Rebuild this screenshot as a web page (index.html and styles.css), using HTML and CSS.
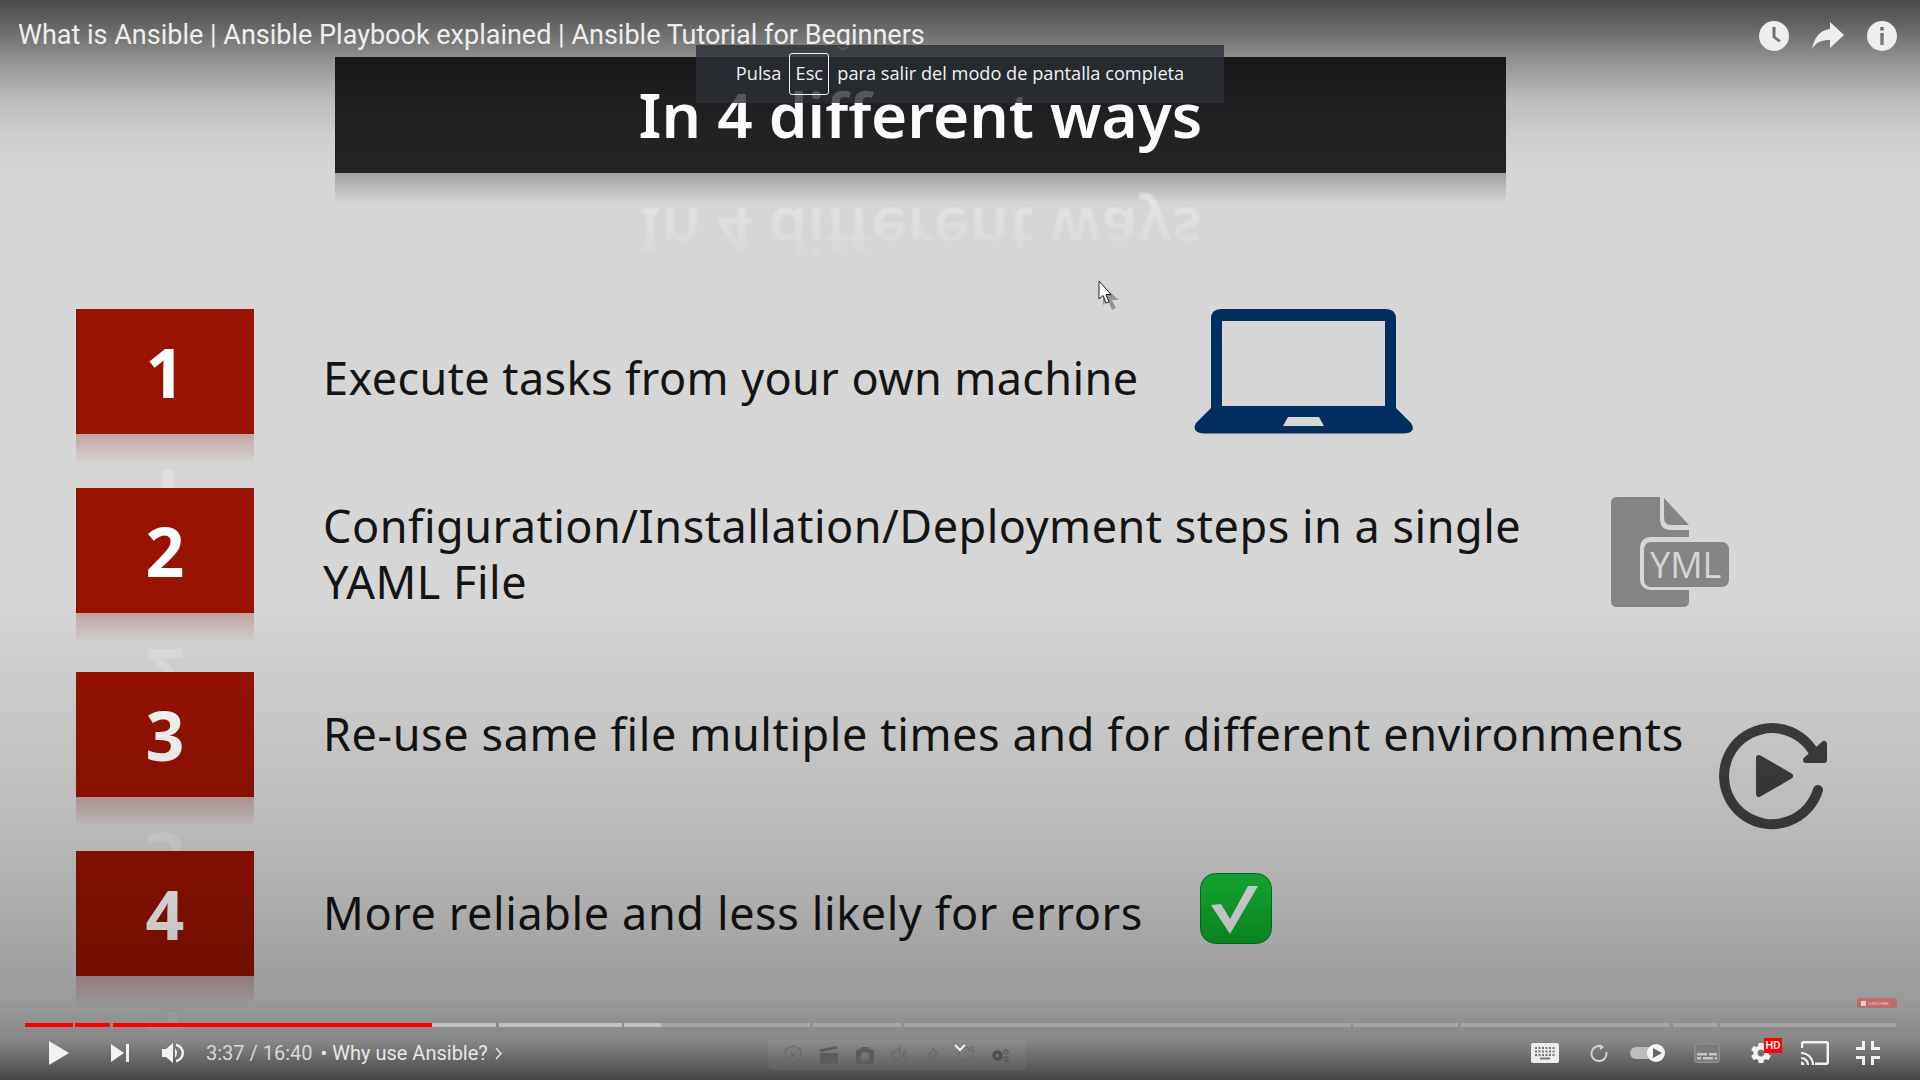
FILE: index.html
```html
<!DOCTYPE html>
<html lang="en">
<head>
<meta charset="utf-8">
<title>What is Ansible</title>
<link rel="stylesheet" href="styles.css">
</head>
<body>
<main class="player">
  <section class="slide">
    <div class="banner"><h1 class="banner-title">In 4 different ways</h1></div>
    <div class="banner-reflect"><div class="banner-flip">In 4 different ways</div></div>
    <div class="rows">
      <div class="row">
        <div class="badge-col"><div class="badge">1</div><div class="reflect"><div class="reflect-digit">1</div></div></div>
        <p class="row-text t1">Execute tasks from your own machine</p>
        <svg class="icon-laptop" width="220" height="125" viewBox="0 0 220 125"><path fill="#002e5e" fill-rule="evenodd" d="M27 0H192Q202 0 202 10V99L217 114Q223 124 210 124.500H10Q-3 124 2 114L17 99V10Q17 0 27 0ZM28 12V97H191V12ZM94 108L89 117H130L125 108Z"/></svg>
      </div>
      <div class="row">
        <div class="badge-col"><div class="badge">2</div><div class="reflect"><div class="reflect-digit">2</div></div></div>
        <p class="row-text t2">Configuration/Installation/Deployment steps in a single YAML File</p>
        <svg class="icon-file" width="118" height="110" viewBox="0 0 118 110">
          <path fill="#858585" d="M6 0H49V22Q49 33 60 33H78V104Q78 110 72 110H6Q0 110 0 104V6Q0 0 6 0Z"/>
          <path fill="#858585" d="M53 1L78 28H60Q53 28 53 20Z"/>
          <rect x="29" y="40" width="89" height="53" rx="10" fill="#d6d6d6"/>
          <rect x="33" y="45" width="85" height="45" rx="7" fill="#858585"/>
          <text class="yml-text" x="39" y="81">YML</text>
        </svg>
      </div>
      <div class="row">
        <div class="badge-col"><div class="badge">3</div><div class="reflect"><div class="reflect-digit">3</div></div></div>
        <p class="row-text t3">Re-use same file multiple times and for different environments</p>
        <svg class="icon-replay" width="112" height="112" viewBox="0 0 112 112">
          <path fill="none" stroke="#3e3e40" stroke-width="10" stroke-linecap="round" d="M97.500 36A48 48 0 1 0 99 68"/>
          <path fill="#3e3e40" stroke="#3e3e40" stroke-width="6" stroke-linejoin="round" d="M105 22V38H87Z"/>
          <path fill="#3e3e40" stroke="#3e3e40" stroke-width="6" stroke-linejoin="round" d="M40 36L71 54L40 72Z"/>
        </svg>
      </div>
      <div class="row">
        <div class="badge-col"><div class="badge">4</div><div class="reflect"><div class="reflect-digit">4</div></div></div>
        <p class="row-text t4">More reliable and less likely for errors</p>
        <svg class="icon-check" width="72" height="71" viewBox="0 0 72 71">
          <defs><linearGradient id="chk" x1="0" y1="0" x2="0" y2="1"><stop offset="0" stop-color="#17c438"/><stop offset="1" stop-color="#0ba829"/></linearGradient></defs>
          <rect x="0.500" y="0.500" width="71" height="70" rx="15" fill="url(#chk)" stroke="#0b7d20"/>
          <path fill="#f2f2f2" d="M11 32L21 31L30 46L48 13H58L30 61Z"/>
        </svg>
      </div>
    </div>
    <svg class="cursor" width="24" height="32" viewBox="0 0 24 32"><path fill="#000" opacity=".3" d="M5 6V25L10 21L14 30L18 28L14 20H21Z"/><path fill="#fff" stroke="#222" stroke-width="1" d="M1 1V19L5 15.500L8 23L11 22L8 14.500H13Z"/></svg>
  </section>

  <div class="shade-top"></div>
  <div class="shade-bottom"></div>

  <header class="topbar">
    <div class="video-title">What is Ansible | Ansible Playbook explained | Ansible Tutorial for Beginners</div>
    <div class="top-actions">
      <svg width="30" height="30" viewBox="0 0 30 30"><path class="ic-light" fill-rule="evenodd" d="M15 0A15 15 0 1 1 15 30A15 15 0 1 1 15 0ZM13.500 6V16.500L20 21.500L21.800 19.500L16.500 15.300V6Z"/></svg>
      <svg width="32" height="28" viewBox="0 0 32 28"><path class="ic-light" d="M18 0L32 13L18 26V18C10 18 4 20 0 27C2 16 8 8 18 7Z"/></svg>
      <svg width="30" height="30" viewBox="0 0 30 30"><path class="ic-light" fill-rule="evenodd" d="M15 0A15 15 0 1 1 15 30A15 15 0 1 1 15 0ZM13.300 6V9.500H16.700V6ZM13.300 12V24H16.700V12Z"/></svg>
    </div>
  </header>

  <div class="esc-bubble"><span>Pulsa</span><kbd class="esc-key">Esc</kbd><span>para salir del modo de pantalla completa</span></div>

  <div class="subscribe"><span class="subscribe-dot"></span><span>SUBSCRIBE</span></div>

  <footer class="controls">
    <div class="progress">
      <div class="seg" style="width:48px"><i class="played" style="width:100%"></i></div>
      <div class="seg" style="width:35px"><i class="played" style="width:100%"></i></div>
      <div class="seg" style="width:383px"><i class="played" style="width:319px"></i></div>
      <div class="seg seg-buf" style="width:123px"></div>
      <div class="seg seg-mix" style="width:186px"></div>
      <div class="seg" style="width:88px"></div>
      <div class="seg" style="width:447px"></div>
      <div class="seg" style="width:105px"></div>
      <div class="seg" style="width:209px"></div>
      <div class="seg" style="width:45px"></div>
      <div class="seg" style="width:176px"></div>
    </div>
    <div class="ctl-row">
      <div class="ctl-left">
        <svg class="c-play" width="20" height="24" viewBox="0 0 20 24"><path class="ic-white" d="M0 0L20 12L0 24Z"/></svg>
        <svg class="c-next" width="18" height="18" viewBox="0 0 18 18"><path class="ic-white" d="M0 0L13 9L0 18ZM15 0H18V18H15Z"/></svg>
        <svg class="c-vol" width="22" height="22" viewBox="0 0 22 22"><path class="ic-white" d="M0 7H4L11 1V21L4 15H0ZM13 6Q17 11 13 16ZM14 1.500Q22 4 22 11T14 20.500V18Q19.500 16 19.500 11T14 4Z"/></svg>
        <span class="time">3:37 / 16:40</span>
        <span class="chapter">• Why use Ansible?</span>
        <svg class="chapter-arrow" width="7" height="13" viewBox="0 0 7 13"><path d="M1 1L6 6.500L1 12"/></svg>
      </div>
      <div class="ext-bar">
        <svg width="18" height="20" viewBox="0 0 18 20"><path class="ext-line" d="M9 1L16.500 4V10C16.500 15 12 18 9 19C6 18 1.500 15 1.500 10V4ZM6.500 7.500L11.500 12.500M11.500 7.500L6.500 12.500"/></svg>
        <svg width="18" height="18" viewBox="0 0 18 18"><path class="ext-fill" d="M0 7H18V18H0ZM0 3.500L16.500 0L17.300 2.500L0.500 6Z"/></svg>
        <svg width="18" height="17" viewBox="0 0 18 17"><path class="ext-fill" fill-rule="evenodd" d="M2 2.500H4L5.500 0H12.500L14 2.500H16Q18 2.500 18 4.500V15Q18 17 16 17H2Q0 17 0 15V4.500Q0 2.500 2 2.500ZM9 5A4.500 4.500 0 1 0 9 14A4.500 4.500 0 1 0 9 5Z"/></svg>
        <svg width="16" height="18" viewBox="0 0 16 18"><path class="ext-line" d="M1 6.500H4L9 1.500V16.500L4 11.500H1ZM11.500 6Q13.500 9 11.500 12M13 3.500Q17 9 13 14.500"/></svg>
        <svg width="15" height="17" viewBox="0 0 15 17"><path class="ext-line" d="M8 1.500L13.500 7L10 8L8 12L3 7L7 5ZM5 9.500L1 15"/></svg>
        <svg width="16" height="18" viewBox="0 0 16 18"><path class="ext-line" d="M12.500 3A7 7 0 1 0 15 9M10 3.500L15 1V6Z"/></svg>
        <svg width="18" height="13" viewBox="0 0 18 13"><circle class="ext-gear" cx="5.500" cy="6.500" r="3.500"/><circle class="ext-ring" cx="14" cy="2.800" r="2"/><circle class="ext-ring" cx="14" cy="10" r="2"/></svg>
        <svg class="ext-chevron" width="12" height="8" viewBox="0 0 12 8"><path d="M1 1L6 6L11 1"/></svg>
      </div>
      <div class="ctl-right">
        <svg class="c-kbd" width="28" height="20" viewBox="0 0 28 20">
          <rect width="28" height="20" rx="2" fill="#ededed"/>
          <path fill="#777" d="M4 4h2v2H4zM7.500 4h2v2h-2zM11 4h2v2h-2zM14.500 4h2v2h-2zM18 4h2v2h-2zM21.500 4h2v2h-2zM4 7.500h2v2H4zM7.500 7.500h2v2h-2zM11 7.500h2v2h-2zM14.500 7.500h2v2h-2zM18 7.500h2v2h-2zM21.500 7.500h2v2h-2zM4 11h2v2H4zM7.500 11h2v2h-2zM11 11h2v2h-2zM14.500 11h2v2h-2zM18 11h2v2h-2zM21.500 11h2v2h-2zM9 14.500h10v2H9z"/>
        </svg>
        <svg class="c-loop" width="18" height="18" viewBox="0 0 18 18"><path fill="none" stroke="#d2d2d2" stroke-width="2" d="M12 2.700A7.500 7.500 0 1 0 16.300 8"/><path fill="#d2d2d2" d="M9.500 0L14 3L10 6Z"/></svg>
        <div class="toggle"><span class="toggle-knob"><svg width="9" height="10" viewBox="0 0 9 10"><path fill="#666" d="M0 0L9 5L0 10Z"/></svg></span></div>
        <svg class="c-subs" width="26" height="20" viewBox="0 0 26 20">
          <rect x="0.750" y="0.750" width="24.500" height="18.500" rx="3" fill="#7a7a7a" stroke="#8f8f8f" stroke-width="1.500"/>
          <path fill="#c4c4c4" d="M3 10H13V12.500H3ZM15 10H23V12.500H15ZM3 14H7V16.500H3ZM9 14H19V16.500H9ZM21 14H23V16.500H21Z"/>
        </svg>
        <div class="gear-wrap">
          <svg width="24" height="24" viewBox="0 0 24 24"><path class="ic-white" d="M19.430 12.980c.04-.32.07-.64.07-.98s-.03-.66-.07-.98l2.110-1.650c.19-.15.24-.42.12-.64l-2-3.460c-.12-.22-.39-.3-.61-.22l-2.490 1c-.52-.4-1.080-.73-1.690-.98l-.38-2.650C14.460 2.180 14.250 2 14 2h-4c-.25 0-.46.18-.49.42l-.38 2.650c-.61.25-1.170.59-1.690.98l-2.490-1c-.23-.09-.49 0-.61.22l-2 3.460c-.13.22-.07.49.12.64l2.110 1.650c-.04.32-.07.65-.07.98s.03.66.07.98l-2.110 1.650c-.19.15-.24.42-.12.64l2 3.460c.12.22.39.3.61.22l2.490-1c.52.4 1.080.73 1.690.98l.38 2.650c.03.24.24.42.49.42h4c.25 0 .46-.18.49-.42l.38-2.650c.61-.25 1.170-.59 1.690-.98l2.490 1c.23.09.49 0 .61-.22l2-3.460c.12-.22.07-.49-.12-.64l-2.110-1.650zM12 15.500c-1.930 0-3.500-1.570-3.500-3.500s1.570-3.500 3.500-3.500 3.500 1.570 3.500 3.500-1.570 3.500-3.500 3.500z"/></svg>
          <span class="hd">HD</span>
        </div>
        <svg class="c-cast" width="28" height="24" viewBox="0 0 28 24"><path fill="none" stroke="#f2f2f2" stroke-width="2.500" d="M1 7V3Q1 1.200 3 1.200H25Q26.800 1.200 26.800 3V21Q26.800 22.800 25 22.800H14"/><path fill="none" stroke="#f2f2f2" stroke-width="2.200" d="M0 12A12 12 0 0 1 12 24M0 17A7 7 0 0 1 7 24"/><path fill="#f2f2f2" d="M0 20.500A3.500 3.500 0 0 1 3.500 24H0Z"/></svg>
        <svg class="c-exit" width="24" height="24" viewBox="0 0 24 24"><path fill="none" stroke="#f2f2f2" stroke-width="3" d="M0 7.500H7.500V0M16.500 0V7.500H24M24 16.500H16.500V24M7.500 24V16.500H0"/></svg>
      </div>
    </div>
  </footer>
</main>
</body>
</html>
```

FILE: styles.css
```css
* { box-sizing: border-box; }
html, body { margin: 0; padding: 0; background: #000; }
.player { position: relative; width: 1920px; height: 1080px; overflow: hidden; font-family: Roboto, "Liberation Sans", sans-serif; }

/* slide */
.slide { width: 1920px; height: 1080px; background: #d6d6d6; padding-top: 57px; font-family: "Noto Sans", "Open Sans", sans-serif; position: relative; }
.banner { margin-left: 335px; width: 1171px; height: 116px; background: #232325; }
.banner-title { position: relative; z-index: 1; margin: 0; text-align: center; color: #fcfcfc; font-size: 62px; font-weight: 600; line-height: 114px; }
.banner-reflect { margin-left: 335px; width: 1171px; height: 136px; overflow: hidden; background: linear-gradient(#a2a2a2, #d6d6d6 30px, transparent 30px); }
.banner-flip { height: 116px; text-align: center; color: #ededed; font-size: 62px; font-weight: 600; line-height: 114px; transform: scaleY(-1); filter: blur(.8px); -webkit-mask-image: linear-gradient(to top, rgba(0,0,0,.6) 25%, transparent 80%); mask-image: linear-gradient(to top, rgba(0,0,0,.6) 25%, transparent 80%); }

.rows { margin-left: 76px; display: grid; grid-template-rows: 179px 184px 179px 179px; }
.row { display: flex; align-items: flex-start; }
.badge-col { width: 179px; height: 100%; display: flex; flex-direction: column; flex: none; margin-right: 68px; padding-right: 1px; }
.badge { height: 125px; background: #981300; color: #fff; font-size: 68px; font-weight: 700; line-height: 125px; text-align: center; }
.reflect { flex: 1; overflow: hidden; background: linear-gradient(#c3a4a0, #d6d6d6 30px, transparent 30px); }
.reflect-digit { height: 125px; color: #dfdfdf; font-size: 68px; font-weight: 700; line-height: 125px; text-align: center; transform: scaleY(-1); }
.row-text { margin: 0; flex: none; color: #141414; font-size: 45px; line-height: 56px; }
.t1 { width: 871px; margin-top: 41px; letter-spacing: .4px; }
.t2 { width: 1288px; margin-top: 10px; padding-right: 60px; letter-spacing: .5px; }
.t3 { width: 1396px; margin-top: 34px; letter-spacing: .6px; }
.t4 { width: 877px; margin-top: 34px; letter-spacing: .6px; }
.icon-file { margin-top: 9px; flex: none; }
.icon-replay { margin-top: 50px; flex: none; }
.icon-check { margin-top: 22px; flex: none; }
.icon-laptop { flex: none; }
.yml-text { font-family: "Open Sans", sans-serif; font-size: 36px; fill: #d6d6d6; }
.cursor { position: absolute; left: 1098px; top: 280px; }

/* shades */
.shade-top { position: absolute; left: 0; top: 0; width: 100%; height: 180px; background: linear-gradient(rgba(0,0,0,.66) 0, rgba(0,0,0,.5) 30px, rgba(0,0,0,.32) 60px, rgba(0,0,0,.12) 100px, rgba(0,0,0,.03) 140px, transparent 180px); }
.shade-bottom { position: absolute; left: 0; bottom: 0; width: 100%; height: 480px; background: linear-gradient(transparent 0, rgba(0,0,0,.14) 240px, rgba(0,0,0,.19) 300px, rgba(0,0,0,.28) 400px, rgba(0,0,0,.37) 440px, rgba(0,0,0,.52) 460px, rgba(0,0,0,.68) 480px); }

/* top bar */
.topbar { position: absolute; z-index: 2; left: 0; top: 0; width: 100%; display: flex; justify-content: space-between; padding: 19px 23px 0 18px; }
.video-title { color: #eee; font-size: 27px; line-height: 32px; }
.top-actions { display: flex; align-items: center; gap: 23px; margin-top: 2px; }
.ic-light { fill: #eeeeee; }
.ic-white { fill: #f2f2f2; }

/* esc bubble */
.esc-bubble { position: absolute; z-index: 3; left: 696px; top: 45px; width: 528px; height: 58px; padding-bottom: 2px; display: flex; align-items: center; justify-content: center; gap: 8px; background: rgba(42,46,52,.8); color: #f2f2f2; font-family: "Open Sans", sans-serif; font-size: 18.200px; }
.esc-key { width: 40px; height: 42px; margin-top: 2px; padding-bottom: 2px; display: flex; align-items: center; justify-content: center; font: inherit; border: 1px solid #f2f2f2; border-radius: 3px; }

/* subscribe */
.subscribe { position: absolute; left: 1857px; top: 998px; width: 40px; height: 10px; display: flex; align-items: center; gap: 2px; padding-left: 4px; background: rgba(240,50,50,.45); border-radius: 2px; color: rgba(255,255,255,.6); font-size: 4px; }
.subscribe-dot { width: 5px; height: 5px; background: rgba(255,255,255,.7); flex: none; }

/* controls */
.controls { position: absolute; left: 0; bottom: 0; width: 100%; }
.progress { display: flex; gap: 2.700px; margin-left: 24.500px; width: 1872px; height: 4px; }
.seg { height: 4px; background: rgba(255,255,255,.2); position: relative; flex: none; }
.seg-buf { background: rgba(255,255,255,.45); }
.seg-mix { background: linear-gradient(90deg, rgba(255,255,255,.45) 20%, rgba(255,255,255,.2) 20%); }
.played { display: block; height: 4px; background: #f00; }
.seg:nth-child(3) { background: rgba(255,255,255,.45); }
.ctl-row { display: grid; grid-template-columns: 768px 258px 1fr; height: 41px; margin-top: 12px; }
.ctl-left { display: flex; align-items: center; height: 28px; padding-left: 49px; color: #ddd; font-size: 20px; }
.c-next { margin-left: 42px; }
.c-vol { margin-left: 33px; }
.time { margin-left: 22px; color: #d8d8d8; }
.chapter { margin-left: 8px; color: #e6e6e6; }
.chapter-arrow { margin-left: 7px; fill: none; stroke: #e6e6e6; stroke-width: 1.500; }
.ext-bar { position: relative; height: 30px; margin-top: 1px; display: flex; align-items: center; justify-content: space-between; padding: 0 16px; border-radius: 5px; background: rgba(255,255,255,.05); }
.ext-line { fill: none; stroke: #666; stroke-width: 1.300; opacity: .8; }
.ext-fill { fill: #5c5c5c; }
.ext-gear { fill: none; stroke: #505050; stroke-width: 3.500; }
.ext-ring { fill: none; stroke: #5a5a5a; stroke-width: 1.300; }
.ext-chevron { position: absolute; left: 186px; top: 4px; fill: none; stroke: #f2f2f2; stroke-width: 2; }
.ctl-right { position: relative; display: flex; align-items: center; height: 28px; padding-left: 505px; }
.c-loop { margin-left: 31px; }
.toggle { position: relative; width: 34px; height: 12px; margin-left: 22px; background: #bdbdbd; border-radius: 6px; }
.toggle-knob { position: absolute; right: -1px; top: -3px; width: 18px; height: 18px; border-radius: 50%; background: #f4f4f4; display: flex; align-items: center; justify-content: center; padding-left: 2px; }
.c-subs { margin-left: 30px; }
.gear-wrap { position: relative; width: 24px; height: 24px; margin-left: 29px; }
.hd { position: absolute; left: 15px; top: -3px; width: 18px; height: 15px; background: #f00; color: #fff; font-size: 11px; font-weight: 500; line-height: 15px; text-align: center; }
.c-cast { margin-left: 28px; }
.c-exit { margin-left: 27px; }
```
